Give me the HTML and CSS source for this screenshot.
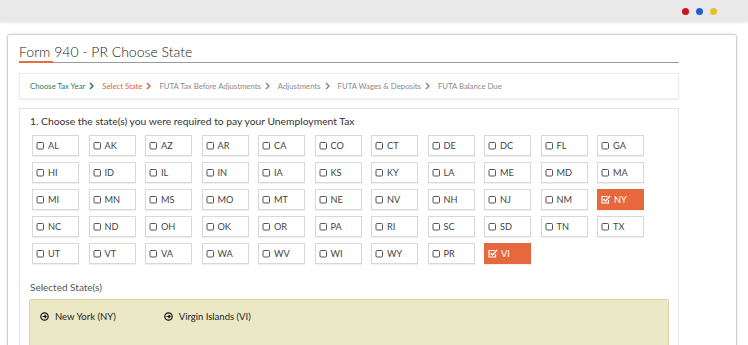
FILE: index.html
```html
<!DOCTYPE html>
<html>
<head>
<meta charset="utf-8">
<link rel="stylesheet" href="styles.css">
</head>
<body>
<div class="topbar">
  <span class="dot red"></span><span class="dot blue"></span><span class="dot yellow"></span>
</div>
<div class="page">
  <div class="card">
    <h1 class="title">Form 940 - PR Choose State</h1>
    <div class="crumbs">
      <span class="crumb done">Choose Tax Year</span>
      <svg class="chev done" width="5" height="8" viewBox="0 0 5 8"><path d="M1 1 L4 4 L1 7" fill="none" stroke="currentColor" stroke-width="1.5"/></svg>
      <span class="crumb active">Select State</span>
      <svg class="chev active" width="5" height="8" viewBox="0 0 5 8"><path d="M1 1 L4 4 L1 7" fill="none" stroke="currentColor" stroke-width="1.5"/></svg>
      <span class="crumb">FUTA Tax Before Adjustments</span>
      <svg class="chev" width="5" height="8" viewBox="0 0 5 8"><path d="M1 1 L4 4 L1 7" fill="none" stroke="currentColor" stroke-width="1.5"/></svg>
      <span class="crumb">Adjustments</span>
      <svg class="chev" width="5" height="8" viewBox="0 0 5 8"><path d="M1 1 L4 4 L1 7" fill="none" stroke="currentColor" stroke-width="1.5"/></svg>
      <span class="crumb">FUTA Wages &amp; Deposits</span>
      <svg class="chev" width="5" height="8" viewBox="0 0 5 8"><path d="M1 1 L4 4 L1 7" fill="none" stroke="currentColor" stroke-width="1.5"/></svg>
      <span class="crumb">FUTA Balance Due</span>
    </div>
    <div class="question">
      <p class="q-text">1. Choose the state(s) you were required to pay your Unemployment Tax</p>
      <div class="grid" id="grid"></div>
      <p class="sel-label">Selected State(s)</p>
      <div class="selected">
        <span class="sel-item"><svg width="9" height="9" viewBox="0 0 9 9"><circle cx="4.5" cy="4.5" r="3.7" fill="none" stroke="#111" stroke-width="1.2"/><path d="M2.6 4.5 H6.2 M4.6 2.9 L6.2 4.5 L4.6 6.1" fill="none" stroke="#111" stroke-width="1.1"/></svg>New York (NY)</span>
        <span class="sel-item"><svg width="9" height="9" viewBox="0 0 9 9"><circle cx="4.5" cy="4.5" r="3.7" fill="none" stroke="#111" stroke-width="1.2"/><path d="M2.6 4.5 H6.2 M4.6 2.9 L6.2 4.5 L4.6 6.1" fill="none" stroke="#111" stroke-width="1.1"/></svg>Virgin Islands (VI)</span>
      </div>
    </div>
  </div>
</div>
<script>
var states = ["AL","AK","AZ","AR","CA","CO","CT","DE","DC","FL","GA","HI","ID","IL","IN","IA","KS","KY","LA","ME","MD","MA","MI","MN","MS","MO","MT","NE","NV","NH","NJ","NM","NY","NC","ND","OH","OK","OR","PA","RI","SC","SD","TN","TX","UT","VT","VA","WA","WV","WI","WY","PR","VI"];
var checked = {NY:1, VI:1};
var box = '<svg class="cb" width="9" height="9" viewBox="0 0 9 9"><rect x="1" y="1.5" width="6.5" height="6.5" rx="1" fill="none" stroke="currentColor" stroke-width="1"/></svg>';
var tick = '<svg class="cb" width="10" height="9" viewBox="0 0 10 9"><path d="M6.5 1.5 H1 V8 H7.5 V5" fill="none" stroke="currentColor" stroke-width="1.2"/><path d="M2.6 4.2 L4.4 6 L9 1" fill="none" stroke="currentColor" stroke-width="1.4"/></svg>';
var g = document.getElementById('grid');
var html = '';
states.forEach(function(s){
  var on = checked[s];
  html += '<label class="st' + (on ? ' on' : '') + '">' + (on ? tick : box) + '<span>' + s + '</span></label>';
});
g.innerHTML = html;
</script>
</body>
</html>
```
FILE: styles.css
```css
* { box-sizing: border-box; }
html, body { margin: 0; padding: 0; background: #fff; }
body { font-family: Lato, "Open Sans", sans-serif; color: #333; width: 748px; height: 345px; overflow: hidden; }

.topbar {
  height: 22px;
  background: #e9e9e9;
  display: flex;
  align-items: center;
  justify-content: flex-end;
  gap: 7px;
  padding-right: 31px;
  box-shadow: 0 1px 3px rgba(0,0,0,0.08);
}
.dot { width: 7px; height: 7px; border-radius: 50%; display: block; }
.red { background: #d0121e; }
.blue { background: #1f5fd6; }
.yellow { background: #e6c02a; }

.page { padding: 12px 11px 0 7px; height: 323px; overflow: hidden; }
.card {
  border: 1px solid #cfcfcf;
  border-radius: 3px;
  box-shadow: 0 0 3px rgba(0,0,0,0.12);
  padding: 7px 57px 40px 11px;
  height: 340px;
}
.title {
  margin: 0;
  font-size: 14px;
  font-weight: 300;
  line-height: 18px;
  color: #222;
  padding-bottom: 1px;
  padding-top: 1px;
  border-bottom: 1px solid #9a9a9a;
  position: relative;
}
.title::after {
  content: "";
  position: absolute;
  left: 0;
  bottom: -1px;
  width: 34px;
  height: 2px;
  background: #e0703f;
}

.crumbs {
  margin-top: 10px;
  height: 26px;
  border: 1px solid #ececec;
  box-shadow: 0 1px 2px rgba(0,0,0,0.07);
  display: flex;
  align-items: center;
  padding-left: 10px;
  font-size: 7.75px;
  color: #8a8a8a;
}
.crumb { white-space: nowrap; }
.chev { margin: 0 8px 0 4px; color: #888; }
.crumb.done, .chev.done { color: #2f7a59; }
.crumb.active, .chev.active { color: #d8653f; }

.question {
  margin-top: 9px;
  border: 1px solid #e4e4e4;
  padding: 5px 10px 0 10px;
  height: 260px;
}
.q-text { margin: 0; font-size: 10.3px; line-height: 14px; color: #333; }
.grid {
  margin: 7px 0 0 2px;
  display: grid;
  grid-template-columns: repeat(11, 47px);
  grid-auto-rows: 21px;
  column-gap: 9.5px;
  row-gap: 6px;
}
.st {
  border: 1px solid #d8d8d8;
  box-shadow: 0 1px 1px rgba(0,0,0,0.06);
  display: flex;
  align-items: center;
  gap: 3px;
  padding-left: 3px;
  font-size: 9.2px;
  color: #444;
}
.st .cb { color: #555; }
.st.on { background: #e8683d; border-color: #e8683d; color: #fff; }
.st.on .cb { color: #fff; }

.sel-label { margin: 16px 0 0 0; font-size: 10px; line-height: 14px; color: #555; }
.selected {
  margin: 5px 0 0 -1px;
  width: 640px;
  height: 60px;
  background: #ebe8c5;
  border: 1px solid #d9d5a9;
  border-radius: 2px;
  display: flex;
  align-items: flex-start;
  gap: 48px;
  padding: 11px 0 0 10px;
}
.sel-item { display: flex; align-items: center; gap: 6px; font-size: 9.5px; color: #222; }
```
